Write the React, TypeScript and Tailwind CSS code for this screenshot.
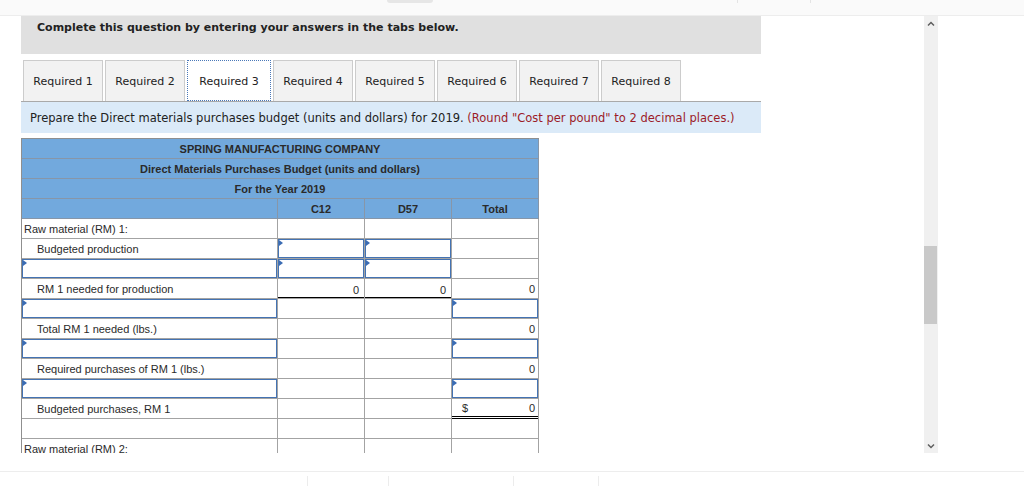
import React from 'react';

const tabs = ['Required 1', 'Required 2', 'Required 3', 'Required 4', 'Required 5', 'Required 6', 'Required 7', 'Required 8'];

const InputBox = () => (
  <div className="relative h-full w-full border border-[#4473b3] bg-white">
    <div className="absolute left-0 top-0 h-0 w-0 border-t-[3px] border-b-[3px] border-l-[4px] border-t-transparent border-b-transparent border-l-[#3b6cb4]" />
  </div>
);

type Cell = 'input' | 'zeroLine' | 'zero' | 'dollar' | '';

interface Row {
  label?: string;
  indent?: boolean;
  labelInput?: boolean;
  c12?: Cell;
  d57?: Cell;
  total?: Cell;
}

const rows: Row[] = [
  { label: 'Raw material (RM) 1:' },
  { label: 'Budgeted production', indent: true, c12: 'input', d57: 'input' },
  { labelInput: true, c12: 'input', d57: 'input' },
  { label: 'RM 1 needed for production', indent: true, c12: 'zeroLine', d57: 'zeroLine', total: 'zero' },
  { labelInput: true, total: 'input' },
  { label: 'Total RM 1 needed (lbs.)', indent: true, total: 'zero' },
  { labelInput: true, total: 'input' },
  { label: 'Required purchases of RM 1 (lbs.)', indent: true, total: 'zero' },
  { labelInput: true, total: 'input' },
  { label: 'Budgeted purchases, RM 1', indent: true, total: 'dollar' },
  {},
  { label: 'Raw material (RM) 2:' },
];

const ValueCell = ({ kind }: { kind?: Cell }) => {
  if (kind === 'input') {
    return (
      <div className="h-[20px] border-b border-r border-[#a3a3a3]">
        <InputBox />
      </div>
    );
  }
  if (kind === 'zeroLine') {
    return (
      <div className="h-[20px] border-b border-r border-[#a3a3a3] pt-[2px]">
        <div className="flex h-[17px] items-center justify-end border-b border-black pr-[5px] pt-[2px]">0</div>
      </div>
    );
  }
  if (kind === 'zero') {
    return <div className="flex h-[20px] items-center justify-end border-b border-r border-[#a3a3a3] pr-[3px] pt-[2px]">0</div>;
  }
  if (kind === 'dollar') {
    return (
      <div className="h-[20px] border-b border-r border-[#a3a3a3]">
        <div className="flex h-[20px] items-center justify-between border-b-[3px] border-double border-black pl-[10px] pr-[3px] pt-[2px]">
          <span>$</span>
          <span>0</span>
        </div>
      </div>
    );
  }
  return <div className="h-[20px] border-b border-r border-[#a3a3a3]" />;
};

export default function App() {
  return (
    <div className="relative flex h-[486px] w-[1024px] flex-col overflow-hidden bg-white">
      {/* top browser strip */}
      <div className="flex h-[16px] shrink-0 items-start border-b border-[#ededed] bg-[#fafafa]">
        <div className="ml-[387px] h-[3px] w-[46px] rounded-b-[3px] bg-[#e6e6e6]" />
        <div className="ml-[304px] h-[3px] w-px bg-[#e4e4e4]" />
        <div className="ml-[72px] h-[3px] w-px bg-[#e4e4e4]" />
      </div>

      <div className="flex h-[437px] shrink-0">
        {/* scroll content */}
        <div className="w-[924px] overflow-hidden pl-[21px]">
          <div className="h-[38px] w-[740px] bg-[#e0e0e0] pl-[16px] pt-[5px] font-['DejaVu_Sans',Verdana,sans-serif] text-[11px] font-bold leading-[14px] text-[#222]">
            Complete this question by entering your answers in the tabs below.
          </div>

          <div className="mt-[6px] flex w-[740px] gap-[2px] pl-[2px] font-['DejaVu_Sans',Verdana,sans-serif] text-[11px] text-[#222]">
            {tabs.map((t, i) =>
              i === 2 ? (
                <div key={t} className="flex h-[41px] w-[84px] items-center justify-center border border-dotted border-[#4a78b8] bg-white pt-[3px]">
                  {t}
                </div>
              ) : (
                <div key={t} className="flex h-[41px] w-[80px] items-center justify-center border border-b-0 border-[#cccccc] bg-[#f2f2f2] pt-[3px]">
                  {t}
                </div>
              )
            )}
          </div>

          <div className="flex h-[32px] w-[740px] items-center border-t border-[#a9a9a9] bg-[#dbeaf8] pl-[9px] pt-[3px] font-['DejaVu_Sans',Verdana,sans-serif] text-[11.5px] text-[#222]">
            <span>Prepare the Direct materials purchases budget (units and dollars) for 2019.&nbsp;</span>
            <span className="text-[#9c1c28]">(Round "Cost per pound" to 2 decimal places.)</span>
          </div>

          {/* budget table */}
          <div className="mt-[5px] w-[518px] border-l border-t border-[#8f8f8f] font-['Liberation_Sans',Arial,sans-serif] text-[11px] leading-[13px] text-[#2a2a2a]">
            <div className="flex h-[20px] items-center justify-center border-b border-r border-[#8796a8] bg-[#72a9dd] pt-[2px] font-bold">
              SPRING MANUFACTURING COMPANY
            </div>
            <div className="flex h-[20px] items-center justify-center border-b border-r border-[#8796a8] bg-[#72a9dd] pt-[2px] font-bold">
              Direct Materials Purchases Budget (units and dollars)
            </div>
            <div className="flex h-[20px] items-center justify-center border-b border-r border-[#8796a8] bg-[#72a9dd] pt-[2px] font-bold">
              For the Year 2019
            </div>
            <div className="grid h-[20px] grid-cols-[256px_87px_87px_87px] border-b border-[#8796a8] bg-[#72a9dd] font-bold">
              <div className="border-r border-[#8796a8]" />
              <div className="flex items-center justify-center border-r border-[#8796a8] pt-[2px]">C12</div>
              <div className="flex items-center justify-center border-r border-[#8796a8] pt-[2px]">D57</div>
              <div className="flex items-center justify-center border-r border-[#8796a8] pt-[2px]">Total</div>
            </div>

            {rows.map((r, i) => (
              <div key={i} className="grid grid-cols-[256px_87px_87px_87px]">
                {r.labelInput ? (
                  <div className="h-[20px] border-b border-r border-[#a3a3a3]">
                    <InputBox />
                  </div>
                ) : (
                  <div className={`flex h-[20px] items-center border-b border-r border-[#a3a3a3] pt-[2px] ${r.indent ? 'pl-[15px]' : 'pl-[2px]'}`}>
                    {r.label}
                  </div>
                )}
                <ValueCell kind={r.c12} />
                <ValueCell kind={r.d57} />
                <ValueCell kind={r.total} />
              </div>
            ))}
          </div>
        </div>

        {/* scrollbar */}
        <div className="flex w-[14px] flex-col items-center bg-[#f0f0f0]">
          <svg className="mt-[5px]" width="8" height="6" viewBox="0 0 8 6">
            <path d="M1 4.5 L4 1.5 L7 4.5" stroke="#5f5f5f" strokeWidth="1.5" fill="none" />
          </svg>
          <div className="mt-[219px] h-[78px] w-[13px] self-start bg-[#c9c9c9]" />
          <div className="flex-1" />
          <svg className="mb-[4px]" width="8" height="6" viewBox="0 0 8 6">
            <path d="M1 1.5 L4 4.5 L7 1.5" stroke="#5f5f5f" strokeWidth="1.5" fill="none" />
          </svg>
        </div>
      </div>

      <div className="h-[18px] shrink-0" />

      {/* bottom strip */}
      <div className="flex flex-1 items-end border-t border-[#ededed]">
        <div className="ml-[307px] h-[10px] w-px bg-[#ececec]" />
        <div className="ml-[80px] h-[10px] w-px bg-[#ececec]" />
        <div className="ml-[124px] h-[10px] w-px bg-[#ececec]" />
        <div className="ml-[84px] h-[10px] w-px bg-[#ececec]" />
      </div>
    </div>
  );
}
